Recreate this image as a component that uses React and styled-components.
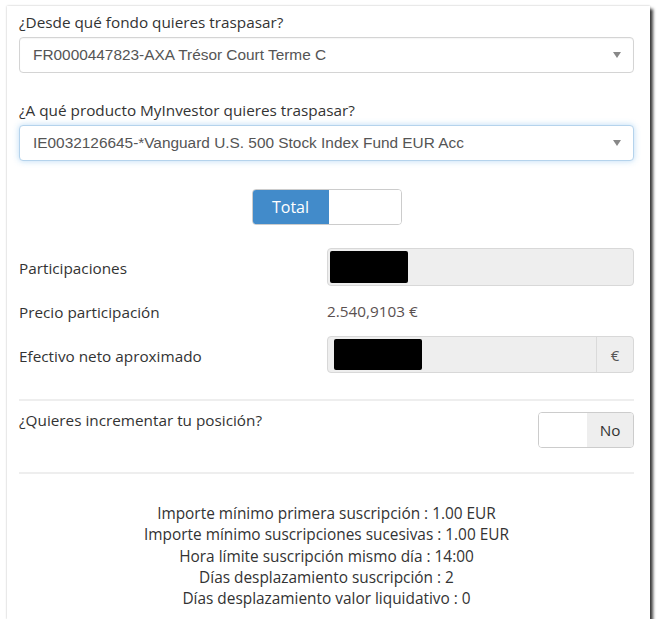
import React from 'react';
import styled, { createGlobalStyle } from 'styled-components';

const GlobalStyle = createGlobalStyle`
    body {
        margin: 0;
        background: #fff;
        font-family: "Open Sans", "Liberation Sans", sans-serif;
        color: #333;
    }
`;

const infoLines = [
    'Importe mínimo primera suscripción : 1.00 EUR',
    'Importe mínimo suscripciones sucesivas : 1.00 EUR',
    'Hora límite suscripción mismo día : 14:00',
    'Días desplazamiento suscripción : 2',
    'Días desplazamiento valor liquidativo : 0',
];

const Select = ({ value, focused }) => (
    <SelectBox focused={focused}>
        <SelectText>{value}</SelectText>
        <Caret viewBox="0 0 8 6">
            <path d="M0 0 L8 0 L4 6 Z" />
        </Caret>
    </SelectBox>
);

const App = () => {
    return (
        <>
            <GlobalStyle />
            <Card>
                <Label>¿Desde qué fondo quieres traspasar?</Label>
                <Select value="FR0000447823-AXA Trésor Court Terme C" />

                <Label spaced>¿A qué producto MyInvestor quieres traspasar?</Label>
                <Select value="IE0032126645-*Vanguard U.S. 500 Stock Index Fund EUR Acc" focused />

                <ToggleRow>
                    <Toggle width={150}>
                        <ToggleOn>Total</ToggleOn>
                        <ToggleOff />
                    </Toggle>
                </ToggleRow>

                <Grid>
                    <RowLabel>Participaciones</RowLabel>
                    <ReadOnly height={38}>
                        <Redacted width={78} />
                    </ReadOnly>

                    <RowLabel>Precio participación</RowLabel>
                    <Value>2.540,9103 €</Value>

                    <RowLabel>Efectivo neto aproximado</RowLabel>
                    <ReadOnly height={37}>
                        <Redacted width={88} offset={4} />
                        <Addon>€</Addon>
                    </ReadOnly>
                </Grid>

                <Divider />

                <QuestionRow>
                    <Question>¿Quieres incrementar tu posición?</Question>
                    <Toggle width={96}>
                        <ToggleBlank />
                        <ToggleNo>No</ToggleNo>
                    </Toggle>
                </QuestionRow>

                <Divider bottom />

                <Info>
                    {infoLines.map(line => <InfoLine key={line}>{line}</InfoLine>)}
                </Info>
            </Card>
        </>
    );
};

export default App;

const Card = styled.div`
    box-sizing: border-box;
    width: 643px;
    height: 613px;
    margin: 6px 0 0 7px;
    padding: 6px 16px 0 12px;
    background: #fff;
    box-shadow: 0 0 2px rgba(0, 0, 0, 0.25), 3px 3px 3px rgba(0, 0, 0, 0.75);
`;

const Label = styled.div`
    font-size: 15.3px;
    line-height: 20px;
    color: #333;
    margin-top: ${props => props.spaced ? '27px' : '0'};
    margin-bottom: 5px;
`;

const SelectBox = styled.div`
    box-sizing: border-box;
    height: 36px;
    display: flex;
    align-items: center;
    padding: 0 12px 0 13px;
    border: 1px solid ${props => props.focused ? '#b5d3ec' : '#d4d4d4'};
    border-radius: 4px;
    box-shadow: ${props => props.focused
        ? '0 0 6px rgba(102, 175, 233, 0.45)'
        : 'inset 0 1px 1px rgba(0, 0, 0, 0.04)'};
    background: #fff;
`;

const SelectText = styled.span`
    flex: 1;
    font-family: "Liberation Sans", Arial, sans-serif;
    font-size: 15.4px;
    color: #555;
`;

const Caret = styled.svg`
    width: 8px;
    height: 6px;
    fill: #888;
`;

const ToggleRow = styled.div`
    display: flex;
    justify-content: center;
    margin-top: 28px;
`;

const Toggle = styled.div`
    box-sizing: border-box;
    width: ${props => props.width}px;
    height: 36px;
    display: flex;
    border: 1px solid #ccc;
    border-radius: 4px;
    overflow: hidden;
    flex-shrink: 0;
`;

const ToggleOn = styled.div`
    width: 76px;
    display: flex;
    align-items: center;
    justify-content: center;
    background: #428bca;
    color: #fff;
    font-size: 16px;
    font-weight: 500;
`;

const ToggleOff = styled.div`
    flex: 1;
    background: #fff;
`;

const ToggleBlank = styled.div`
    width: 48px;
    background: #fff;
`;

const ToggleNo = styled.div`
    flex: 1;
    display: flex;
    align-items: center;
    justify-content: center;
    background: #eee;
    color: #333;
    font-size: 15.3px;
`;

const Grid = styled.div`
    display: grid;
    grid-template-columns: 308px 1fr;
    align-items: center;
    row-gap: 12px;
    margin-top: 23px;
`;

const RowLabel = styled.div`
    font-size: 15.3px;
    line-height: 20px;
    padding-top: 2px;
`;

const ReadOnly = styled.div`
    box-sizing: border-box;
    height: ${props => props.height}px;
    display: flex;
    align-items: stretch;
    padding: 2px 0 2px 2px;
    background: #eee;
    border: 1px solid #d8d8d8;
    border-radius: 4px;
`;

const Redacted = styled.div`
    width: ${props => props.width}px;
    margin-left: ${props => props.offset || 0}px;
    background: #000;
    border-radius: 2px;
`;

const Addon = styled.div`
    margin: -2px 0 -2px auto;
    width: 36px;
    display: flex;
    align-items: center;
    justify-content: center;
    border-left: 1px solid #dadada;
    color: #555;
    font-size: 15px;
`;

const Value = styled.div`
    font-size: 15.3px;
    line-height: 20px;
    color: #5a5050;
    padding: 3px 0;
`;

const Divider = styled.hr`
    border: 0;
    border-top: 2px solid #eee;
    margin: ${props => props.bottom ? '24px 0 0' : '26px 0 0'};
`;

const QuestionRow = styled.div`
    display: flex;
    justify-content: space-between;
    align-items: flex-start;
    margin-top: 11px;
`;

const Question = styled.div`
    font-size: 15.3px;
    line-height: 20px;
    margin-top: -2px;
`;

const Info = styled.div`
    margin-top: 29px;
    text-align: center;
`;

const InfoLine = styled.div`
    font-size: 15.4px;
    line-height: 21.3px;
    color: #333;
`;
